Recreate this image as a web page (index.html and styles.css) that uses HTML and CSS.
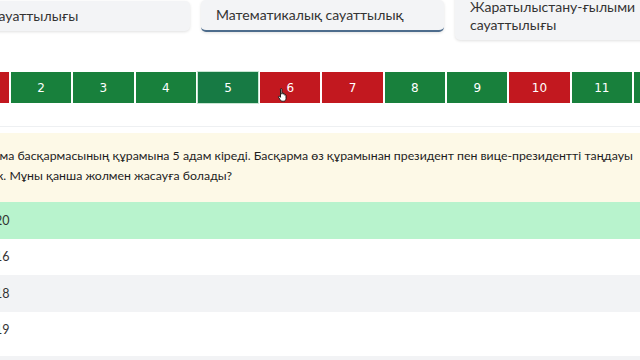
FILE: index.html
```html
<!DOCTYPE html>
<html lang="kk">
<head>
    <meta charset="UTF-8">
    <meta name="viewport" content="width=device-width, initial-scale=1.0">
    <title>Тест</title>
    <link rel="stylesheet" href="styles.css">
</head>
<body>
    <div class="page">
        <div class="tabs">
            <div class="tab">Оқу сауаттылығы</div>
            <div class="tab active">Математикалық сауаттылық</div>
            <div class="tab">Жаратылыстану-ғылыми сауаттылығы</div>
        </div>

        <div class="numbers">
            <div class="num wrong">1</div>
            <div class="num right">2</div>
            <div class="num right">3</div>
            <div class="num right">4</div>
            <div class="num right current">5</div>
            <div class="num wrong hover">6
                <svg class="cursor" width="12" height="14" viewBox="0 0 12 14">
                    <path d="M3.5 1.2c0-.7 1.4-.7 1.4 0v5l.2-1c.2-.6 1.3-.6 1.4 0v1c.1-.6 1.2-.6 1.3 0v1c.2-.5 1.2-.4 1.2.2v3.2c0 1.3-.9 2.6-2.3 2.6H5.1c-.8 0-1.3-.4-1.7-1L1.5 9.1c-.4-.6.4-1.3 1-.8l1 1z" fill="#fff" stroke="#111" stroke-width=".9" stroke-linejoin="round"/>
                </svg>
            </div>
            <div class="num wrong">7</div>
            <div class="num right">8</div>
            <div class="num right">9</div>
            <div class="num wrong">10</div>
            <div class="num right">11</div>
            <div class="num right">12</div>
        </div>

        <div class="card">
            <div class="question">
                Фирма басқармасының құрамына 5 адам кіреді. Басқарма өз құрамынан президент пен вице-президентті таңдауы<br>
                керек. Мұны қанша жолмен жасауға болады?
            </div>
            <div class="answers">
                <div class="answer correct">20</div>
                <div class="answer">16</div>
                <div class="answer odd">18</div>
                <div class="answer">19</div>
                <div class="answer odd next"></div>
            </div>
        </div>
    </div>
</body>
</html>
```

FILE: styles.css
```css
* { margin: 0; padding: 0; box-sizing: border-box; }
body { background: #fff; overflow: hidden; font-family: Lato, "Open Sans", sans-serif; color: #222; }

.page {
    width: 760px;
    margin-left: -53px;
}

/* Subject tabs */
.tabs {
    display: flex;
    align-items: center;
    gap: 11px;
    margin-top: -8px;
}

.tab {
    flex: 0 0 243px;
    padding: 6px 15px;
    font-size: 14px;
    line-height: 18px;
    color: #333;
    background: #f3f4f6;
    border-radius: 5px;
    box-shadow: 0 1px 3px rgba(0, 0, 0, 0.12);
}

.tab.active {
    border-bottom: 2px solid #4d6c8c;
}

/* Question numbers */
.numbers {
    display: flex;
    gap: 2px;
    margin-top: 32px;
    margin-left: 1.7px;
}

.num {
    position: relative;
    flex: 0 0 60.3px;
    height: 31px;
    display: flex;
    align-items: center;
    justify-content: center;
    font-family: "DejaVu Sans", sans-serif;
    font-size: 12px;
    color: #fff;
}

.num.right { background: #18803c; }
.num.wrong { background: #c2181f; }
.num.current { outline: 1px solid #c9e6d3; background: #177a44; }

.cursor {
    position: absolute;
    left: 17px;
    top: 16px;
}

/* Question card */
.card {
    margin-top: 23px;
    border-top: 1px solid #eef0f2;
    padding-top: 6px;
}

.question {
    background: #fdf9e7;
    padding: 13px 0 16px 24px;
    text-indent: 5px;
    font-size: 12.3px;
    line-height: 20px;
    color: #1e1e1e;
}

.answer {
    height: 36.5px;
    display: flex;
    align-items: center;
    padding-left: 48px;
    font-size: 12.5px;
    color: #333;
}

.answer.correct { background: #b8f3cd; }
.answer.odd { background: #f2f3f5; }
.answer.next { margin-top: 8px; }
```
